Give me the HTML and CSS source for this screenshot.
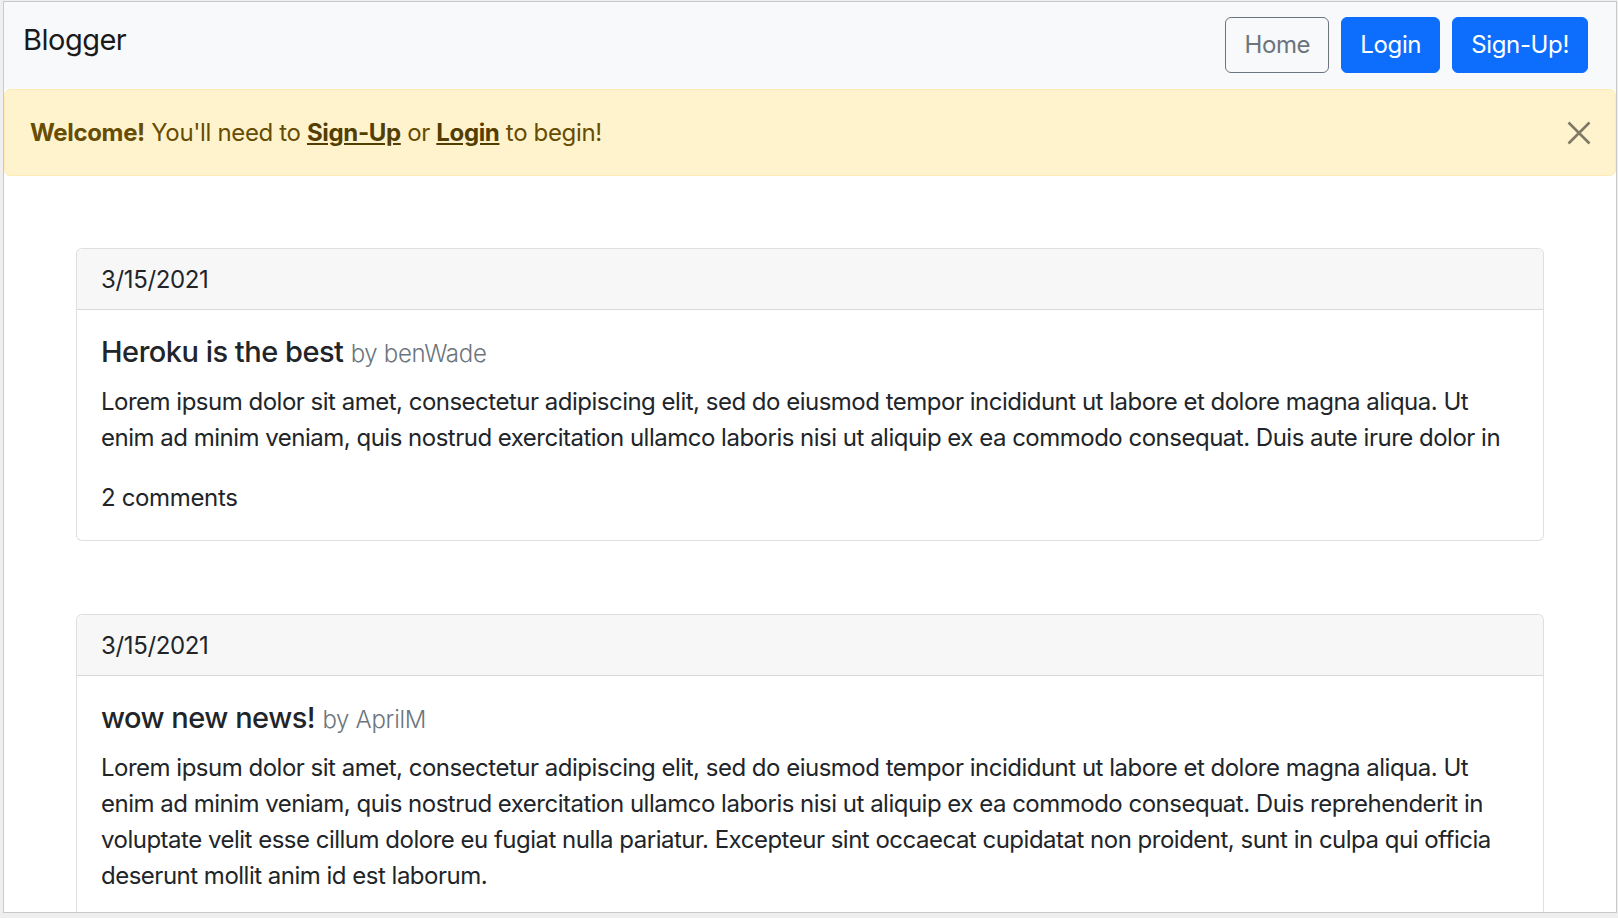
FILE: index.html
```html
<!DOCTYPE html>
<html lang="en">
<head>
<meta charset="utf-8">
<title>Blogger</title>
<link rel="stylesheet" href="styles.css">
</head>
<body>
<div class="frame">
  <nav class="navbar">
    <a class="brand" href="#">Blogger</a>
    <div class="nav-actions">
      <a class="btn btn-outline" href="#">Home</a>
      <a class="btn btn-primary" href="#">Login</a>
      <a class="btn btn-primary" href="#">Sign-Up!</a>
    </div>
  </nav>
  <div class="alert">
    <span class="alert-text"><strong>Welcome!</strong> You'll need to <a class="alert-link" href="#">Sign-Up</a> or <a class="alert-link" href="#">Login</a> to begin!</span>
    <button class="btn-close" aria-label="Close">
      <svg width="24" height="24" viewBox="0 0 24 24"><path d="M1.5 1.5 L22.5 22.5 M22.5 1.5 L1.5 22.5" stroke="#000" stroke-width="2.6" fill="none"/></svg>
    </button>
  </div>
  <main class="posts">
    <article class="card">
      <div class="card-header">3/15/2021</div>
      <div class="card-body">
        <h5 class="card-title">Heroku is the best <small class="author">by benWade</small></h5>
        <p class="card-text">Lorem ipsum dolor sit amet, consectetur adipiscing elit, sed do eiusmod tempor incididunt ut labore et dolore magna aliqua. Ut enim ad minim veniam, quis nostrud exercitation ullamco laboris nisi ut aliquip ex ea commodo consequat. Duis aute irure dolor in</p>
        <div class="comments">2 comments</div>
      </div>
    </article>
    <article class="card">
      <div class="card-header">3/15/2021</div>
      <div class="card-body">
        <h5 class="card-title">wow new news! <small class="author">by AprilM</small></h5>
        <p class="card-text">Lorem ipsum dolor sit amet, consectetur adipiscing elit, sed do eiusmod tempor incididunt ut labore et dolore magna aliqua. Ut enim ad minim veniam, quis nostrud exercitation ullamco laboris nisi ut aliquip ex ea commodo consequat. Duis reprehenderit in voluptate velit esse cillum dolore eu fugiat nulla pariatur. Excepteur sint occaecat cupidatat non proident, sunt in culpa qui officia deserunt mollit anim id est laborum.</p>
      </div>
    </article>
  </main>
</div>
</body>
</html>
```

FILE: styles.css
```css
* { box-sizing: border-box; }
html, body { margin: 0; padding: 0; }
body {
  background: #efefef;
  font-family: Inter, "Noto Sans", "Liberation Sans", sans-serif;
  color: #212529;
  font-size: 24px;
  line-height: 36px;
  letter-spacing: -0.35px;
  overflow: hidden;
  height: 918px;
}
.frame {
  margin: 1px 0 0 3px;
  width: 1614px;
  height: 912px;
  border: 1px solid #c9c9c9;
  background: #fff;
  overflow: hidden;
}
.navbar {
  display: flex;
  justify-content: space-between;
  align-items: flex-start;
  background: #f8f9fa;
  height: 87px;
  padding: 15px 28px 0 19px;
}
.brand {
  font-size: 29px;
  line-height: 45px;
  color: #1a1a1a;
  text-decoration: none;
  font-weight: 400;
  letter-spacing: -0.5px;
}
.nav-actions {
  display: flex;
  gap: 12px;
}
.btn {
  display: inline-block;
  font-size: 24px;
  line-height: 36px;
  padding: 9px 18px;
  border: 1px solid transparent;
  border-radius: 6px;
  text-decoration: none;
}
.btn-outline {
  color: #6c757d;
  border-color: #6c757d;
}
.btn-primary {
  background: #0d6efd;
  border-color: #0d6efd;
  color: #fff;
}
.alert {
  display: flex;
  align-items: center;
  justify-content: space-between;
  background: #fff3cd;
  border: 1px solid #ffecb5;
  border-radius: 6px;
  color: #664d03;
  height: 87px;
  padding: 0 24px 0 25px;
}
.alert strong { font-weight: 700; }
.alert-link {
  color: #523e02;
  font-weight: 700;
  text-decoration: underline;
}
.btn-close {
  background: none;
  border: 0;
  padding: 0;
  width: 24px;
  height: 24px;
  opacity: 0.5;
  display: flex;
}
.posts {
  padding: 72px 72px 0 72px;
  display: flex;
  flex-direction: column;
  gap: 73px;
}
.card {
  border: 1px solid rgba(0,0,0,0.125);
  border-radius: 6px;
  background: #fff;
}
.card-header {
  background: #f7f7f7;
  border-bottom: 1px solid rgba(0,0,0,0.125);
  padding: 13px 24px 11px;
  border-radius: 6px 6px 0 0;
  height: 61px;
}
.card-body {
  padding: 24px;
}
.card-title {
  margin: 0 0 12px;
  font-size: 29px;
  line-height: 36px;
  font-weight: 500;
  letter-spacing: -0.5px;
}
.author {
  font-size: 24px;
  font-weight: 300;
  color: #6c757d;
  letter-spacing: -0.3px;
}
.card-text {
  margin: 0 0 24px;
  letter-spacing: -0.5px;
}
```
